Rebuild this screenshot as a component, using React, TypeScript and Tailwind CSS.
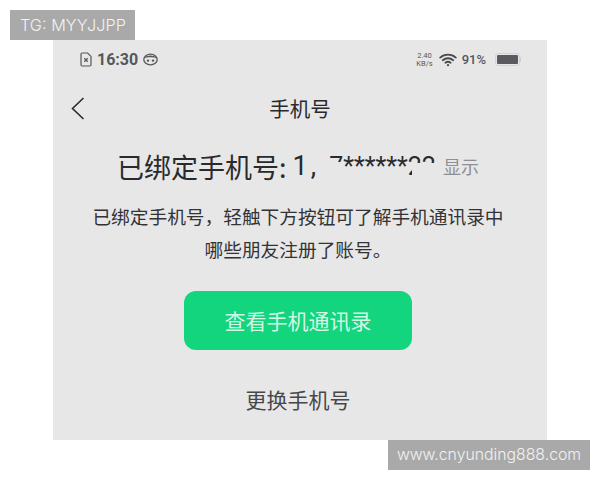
import React from "react";

const cjk = "font-['Noto_Sans_CJK_SC','Noto_Sans',sans-serif]";
const latin = "font-['Roboto','Noto_Sans_CJK_SC',sans-serif]";
const inter = "font-['Inter','Noto_Sans_CJK_SC',sans-serif]";

function Wifi() {
  return (
    <svg width="18" height="14" viewBox="0 0 18 14" fill="none" stroke="#4a4a4c" strokeWidth="1.8" strokeLinecap="round">
      <path d="M1.2 4.6C5.6 .6 12.4 .6 16.8 4.6" />
      <path d="M3.8 7.2C6.8 4.6 11.2 4.6 14.2 7.2" />
      <path d="M6.4 9.8C8 8.5 10 8.5 11.6 9.8" />
      <circle cx="9" cy="12.2" r="1.1" fill="#4a4a4c" stroke="none" />
    </svg>
  );
}

function SimIcon() {
  return (
    <svg width="12" height="15" viewBox="0 0 12 15" fill="none">
      <path d="M1 2.2C1 1.5 1.5 1 2.2 1H7.6L11 4.4V12.8C11 13.5 10.5 14 9.8 14H2.2C1.5 14 1 13.5 1 12.8Z" stroke="#57575a" strokeWidth="1.2" />
      <path d="M4.3 6.3L7.7 9.7M7.7 6.3L4.3 9.7" stroke="#57575a" strokeWidth="1.3" />
    </svg>
  );
}

function FaceIcon() {
  return (
    <svg width="15" height="13" viewBox="0 0 15 13" fill="none">
      <ellipse cx="7.5" cy="6.5" rx="6.7" ry="5.4" stroke="#57575a" strokeWidth="1.3" />
      <path d="M1.2 5.2C2.5 1.6 12.5 1.6 13.8 5.2C11 4 4 4 1.2 5.2Z" fill="#57575a" />
      <circle cx="5" cy="7.6" r="1.2" fill="#57575a" />
      <circle cx="10" cy="7.6" r="1.2" fill="#57575a" />
    </svg>
  );
}

function Battery() {
  return (
    <div className="flex items-center">
      <div className="w-[25px] h-[13px] rounded-[3px] border border-[#d4d4d5] p-[1px]">
        <div className="w-[21px] h-[9px] rounded-[1px] bg-[#5a5a60]" />
      </div>
      <div className="w-[1px] h-[5px] bg-[#cfcfd0]" />
    </div>
  );
}

export default function App() {
  return (
    <div className={`relative w-[600px] h-[480px] bg-white overflow-hidden pt-[40px] pl-[53px] ${cjk}`}>
      <div className={`absolute left-[10px] top-[10px] w-[125px] h-[30px] bg-[#a9a9a9] text-[#f2f2f2] text-[16.3px] font-light leading-[30px] pl-[10px] ${inter}`}>TG: MYYJJPP</div>

      <div className="w-[494px] h-[400px] bg-[#e7e7e8] flex flex-col">
        <div className="h-[39px] flex items-center justify-between pl-[27px] pr-[26px]">
          <div className="flex items-center gap-[5px]">
            <SimIcon />
            <span className={`text-[16px] font-bold text-[#57575a] leading-none ${latin}`}>16:30</span>
            <FaceIcon />
          </div>
          <div className="flex items-center">
            <div className={`flex flex-col items-center text-[#57575a] text-[7.5px] leading-[8px] mr-[6px] ${latin}`}>
              <span>2.40</span>
              <span>KB/s</span>
            </div>
            <Wifi />
            <span className={`text-[13px] font-medium text-[#57575a] ml-[5px] mr-[9px] ${latin}`}>91%</span>
            <Battery />
          </div>
        </div>

        <div className="relative h-[58px] flex items-center justify-center">
          <svg className="absolute left-[17px] top-[17px]" width="16" height="26" viewBox="0 0 16 26" fill="none" stroke="#2b2b2d" strokeWidth="1.6">
            <path d="M13.5 2L2.5 12.5L13.5 23" />
          </svg>
          <span className="text-[20.5px] text-[#29292b] leading-none">手机号</span>
        </div>

        <div className="mt-[5px] h-[48px] pr-[4px] flex items-center justify-center text-[#2a2a2c]">
          <span className="text-[27px] leading-none">已绑定手机号:</span>
          <span className={`text-[27px] leading-none ml-[6px] ${latin}`}>1</span>
          <span className={`text-[27px] leading-none ml-[3px] mr-[13px] ${latin}`}>,</span>
          <span className={`relative text-[25px] leading-none whitespace-nowrap ${latin}`}>
            7******22
            <span className="absolute left-0 top-[8px] w-[12px] h-[18px] bg-[#e7e7e8]" />
            <span className="absolute right-0 top-[9px] w-[24px] h-[18px] bg-[#e7e7e8]" />
          </span>
          <span className="text-[18px] leading-none text-[#8e8e93] ml-[7px]">显示</span>
        </div>

        <div className="mt-[9px] pr-[4px] flex flex-col items-center text-[18.7px] leading-[33px] text-[#333335]">
          <p>已绑定手机号，轻触下方按钮可了解手机通讯录中</p>
          <p>哪些朋友注册了账号。</p>
        </div>

        <button className="ml-[131px] mt-[26px] w-[228px] h-[59px] rounded-[12px] bg-[#13d57e] text-[#d5f5e5] text-[21px] leading-none">查看手机通讯录</button>

        <div className="mt-[33px] pr-[4px] text-center text-[21px] leading-[32px] text-[#48484a]">更换手机号</div>
      </div>

      <div className={`absolute left-[388px] top-[440px] w-[202px] h-[30px] bg-[#a9a9a9] text-[#f2f2f2] text-[15.8px] font-light leading-[30px] text-center ${inter}`}>www.cnyunding888.com</div>
    </div>
  );
}
